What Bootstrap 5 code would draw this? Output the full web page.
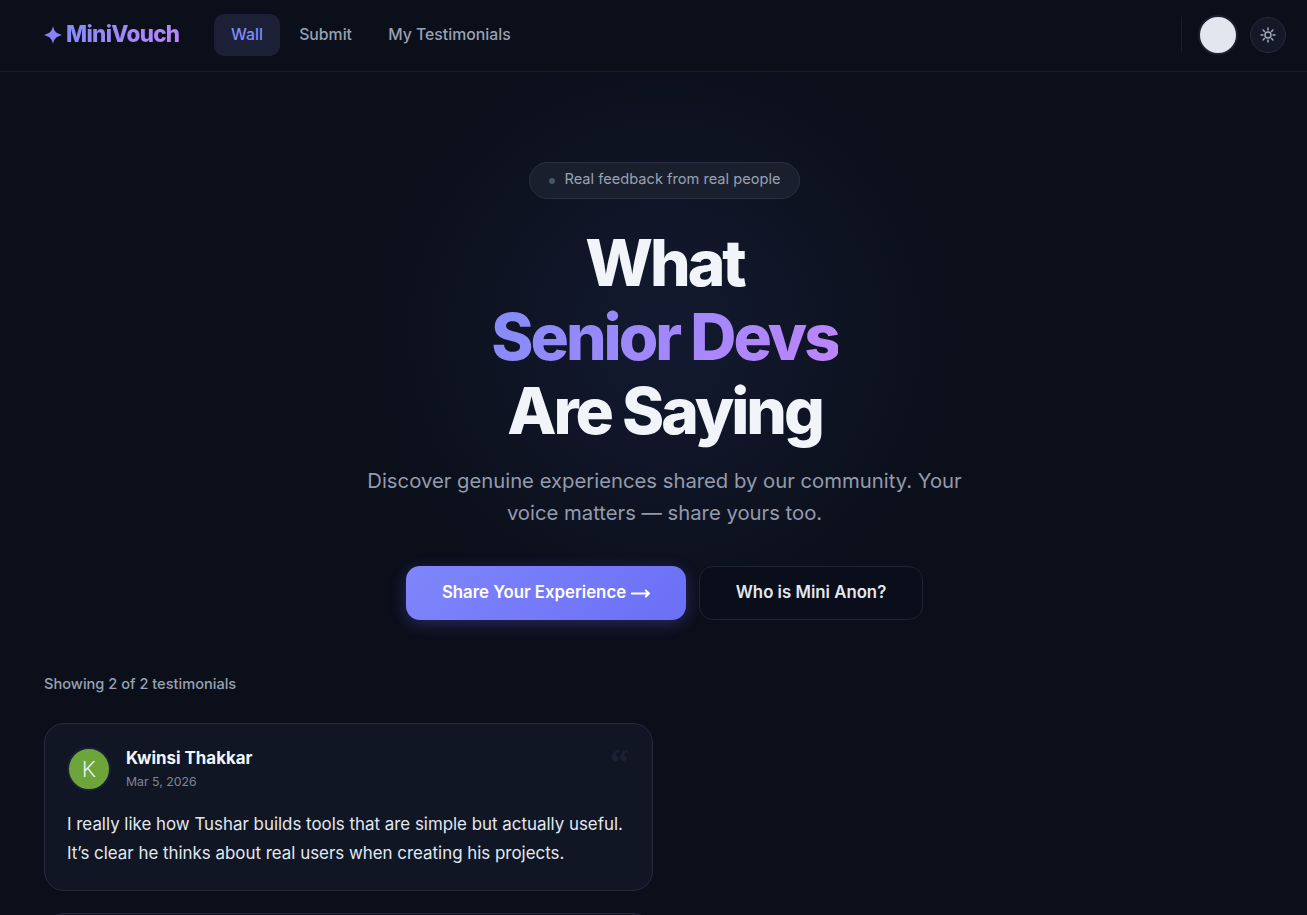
<!DOCTYPE html>
<html lang="en">
<head>
    <meta charset="UTF-8">
    <meta name="viewport" content="width=device-width, initial-scale=1.0">
    <title>MiniVouch</title>
    <link href="https://cdn.jsdelivr.net/npm/bootstrap@5.3.2/dist/css/bootstrap.min.css" rel="stylesheet">
    <style>
        html, body { background: #0b0f1a; }
        body { font-family: Inter, "Liberation Sans", sans-serif; color: #f1f5f9; }

        .top-bar { height: 72px; padding: 0 21px 2px 44px; border-bottom: 1px solid #1a1f2e; }
        .brand-name { font-size: 22.4px; font-weight: 800; letter-spacing: -0.03em; line-height: 1;
            background: linear-gradient(135deg, #818cf8, #c084fc); -webkit-background-clip: text; background-clip: text; color: transparent; }
        .brand-star { width: 18px; height: 18px; margin-right: 4px; }
        .main-links { margin-left: 35px; }
        .main-links a { display: block; padding: 0 16.6px; height: 42px; line-height: 41px; border-radius: 10px; font-size: 15.8px; font-weight: 500; color: #98a2b3; text-decoration: none; margin-right: 3px; }
        .main-links a.current { background: #1b2036; color: #818cf8; }
        .bar-divider { width: 1px; height: 36px; background: #1a1f2e; margin-right: 16px; }
        .user-dot { width: 40px; height: 40px; border-radius: 50%; background: #e2e6ee; border: 2px solid #1b2030; margin-right: 12px; }
        .theme-toggle { width: 36px; height: 36px; border-radius: 50%; padding: 0; background: #141927; border: 1px solid #262c3d; }

        .hero-block { padding: 90px 0 0 22px; text-align: center; background: radial-gradient(circle 300px at 665px 263px, #131a30 0%, rgba(19, 26, 48, 0.55) 45%, rgba(10, 14, 26, 0) 100%); }
        .hero-chip { height: 37px; padding: 0 18.5px 1px; border-radius: 19px; background: #1a1f2d; border: 1px solid #2a3042; font-size: 14.64px; color: #98a2b3; }
        .chip-dot { width: 6px; height: 6px; border-radius: 50%; background: #475569; margin: 1px 10px 0 0; }
        .hero-title { margin: 27px 0 0; font-size: 64px; font-weight: 800; line-height: 74px; letter-spacing: -3px; color: #f1f5f9; }
        .hero-title span { display: block; width: fit-content; margin: 0 auto; background: linear-gradient(135deg, #818cf8, #c084fc); -webkit-background-clip: text; background-clip: text; color: transparent; }
        .hero-sub { width: 640px; margin: 17px auto 0; font-size: 20.27px; line-height: 32px; color: #939bad; }
        .hero-actions { margin-top: 37px; gap: 13px; }
        .btn-share, .btn-anon { height: 54px; border-radius: 14px; font-size: 16.8px; font-weight: 600; display: flex; align-items: center; justify-content: center; }
        .btn-share { width: 280px; gap: 5px; color: #fff; border: 0; background: linear-gradient(135deg, #7f86fb, #6a6ff5); box-shadow: 0 4px 16px rgba(99, 102, 241, 0.3); }
        .btn-anon { width: 224px; color: #e2e8f0; background: #0a0e1a; border: 1px solid #1e2433; }
        .btn-share:hover { color: #fff; background: linear-gradient(135deg, #7f86fb, #6a6ff5); }
        .btn-anon:hover { color: #e2e8f0; background: #0a0e1a; border-color: #1e2433; }

        .wall-area { padding: 0 44px; margin-top: 54px; }
        .wall-count { font-size: 14.6px; font-weight: 500; color: #98a2b3; line-height: 20px; margin-bottom: 29px; }
        .note-column { width: 609px; gap: 22px; }
        .note-box { position: relative; height: 168px; padding: 23px 22px; background: #111624; border: 1px solid #262c3e; border-radius: 20px; }
        .note-avatar { width: 44px; height: 44px; border-radius: 50%; background: #6ea53a; border: 2px solid #1b2036; color: #f1f5f9; font-family: Roboto, sans-serif; font-weight: 300; font-size: 22px; }
        .note-who { margin-left: 15px; }
        .note-author { font-size: 16.9px; font-weight: 700; line-height: 22px; color: #f1f5f9; }
        .note-date { font-size: 12.3px; line-height: 18px; color: #7d8798; margin-top: 4px; }
        .note-quote { position: absolute; top: 14px; right: 23px; font-family: "Liberation Serif", serif; font-weight: 700; font-size: 38px; line-height: 48px; color: #1c2136; }
        .note-text { margin: 19px 0 0; font-size: 16.9px; line-height: 29px; color: #e2e8f0; }
    </style>
</head>
<body>

    <nav class="top-bar d-flex align-items-center">
        <a class="d-flex align-items-center text-decoration-none" href="#">
            <svg class="brand-star" viewBox="0 0 24 24" fill="#8b80fb"><path d="M12 0 C13 6 16 10 24 12 C16 14 13 18 12 24 C11 18 8 14 0 12 C8 10 11 6 12 0 Z"/></svg>
            <span class="brand-name">MiniVouch</span>
        </a>
        <div class="main-links d-flex">
            <a class="current" href="#">Wall</a>
            <a href="#">Submit</a>
            <a href="#">My Testimonials</a>
        </div>
        <div class="ms-auto d-flex align-items-center">
            <div class="bar-divider"></div>
            <div class="user-dot"></div>
            <button class="theme-toggle btn d-flex align-items-center justify-content-center" aria-label="Toggle theme">
                <svg width="16" height="16" viewBox="0 0 24 24" fill="none" stroke="#a3adbd" stroke-width="2.2" stroke-linecap="round"><circle cx="12" cy="12" r="4.5"/><path d="M12 1.5v3M12 19.5v3M1.5 12h3M19.5 12h3M4.6 4.6l2.1 2.1M17.3 17.3l2.1 2.1M4.6 19.4l2.1-2.1M17.3 6.7l2.1-2.1"/></svg>
            </button>
        </div>
    </nav>

    <section class="hero-block">
        <div class="hero-chip d-inline-flex align-items-center"><i class="chip-dot"></i>Real feedback from real people</div>
        <h1 class="hero-title">What<span>Senior Devs</span>Are Saying</h1>
        <p class="hero-sub">Discover genuine experiences shared by our community. Your voice matters — share yours too.</p>
        <div class="hero-actions d-flex justify-content-center">
            <a class="btn btn-share" href="#">Share Your Experience
                <svg width="19" height="10" viewBox="0 0 19 10" fill="none" stroke="#fff" stroke-width="2" stroke-linecap="round" stroke-linejoin="round"><path d="M0.8 5.5H18M14.8 2.4L18 5.5L14.8 8.5"/></svg>
            </a>
            <a class="btn btn-anon" href="#">Who is Mini Anon?</a>
        </div>
    </section>

    <section class="wall-area">
        <div class="wall-count">Showing 2 of 2 testimonials</div>
        <div class="note-column d-flex flex-column">
            <article class="note-box">
                <div class="d-flex align-items-center">
                    <div class="note-avatar d-flex align-items-center justify-content-center flex-shrink-0">K</div>
                    <div class="note-who">
                        <div class="note-author">Kwinsi Thakkar</div>
                        <div class="note-date">Mar 5, 2026</div>
                    </div>
                </div>
                <span class="note-quote">“</span>
                <p class="note-text">I really like how Tushar builds tools that are simple but actually useful. It’s clear he thinks about real users when creating his projects.</p>
            </article>
            <article class="note-box"></article>
        </div>
    </section>

    <script src="https://cdn.jsdelivr.net/npm/bootstrap@5.3.2/dist/js/bootstrap.bundle.min.js"></script>
</body>
</html>
